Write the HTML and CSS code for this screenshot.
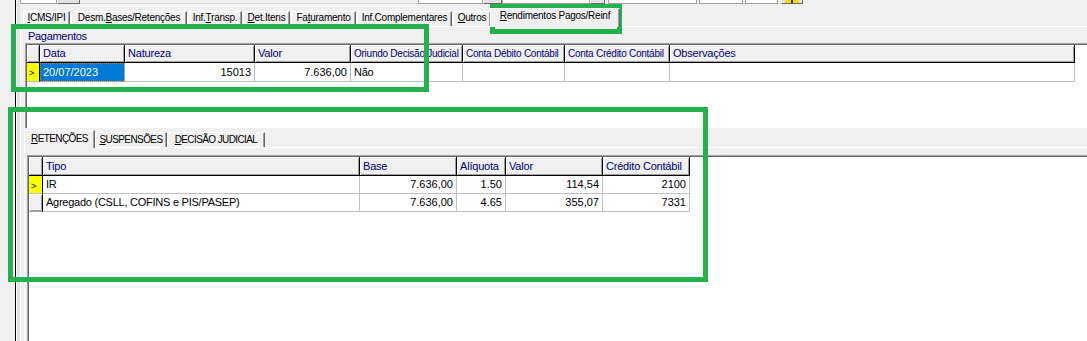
FILE: index.html
```html
<!DOCTYPE html>
<html lang="pt-BR">
<head>
  <meta charset="UTF-8">
  <title>Rendimentos Pagos/Reinf</title>
  <link rel="stylesheet" href="styles.css">
</head>
<body>
  <div class="app">
    <div class="gutter"></div>
    <div class="main">
      <div class="topbar">
        <span class="fld w37"></span><span class="btn w23"></span>
        <span class="gap w338"></span>
        <span class="fld w65"></span><span class="btn w19"></span>
        <span class="fld w88"></span><span class="btn w15"></span>
        <span class="gap w3"></span><span class="fld w89"></span>
        <span class="gap w2"></span><span class="fld w44"></span>
        <span class="gap w2"></span><span class="fld w33"></span>
        <span class="gap w3"></span><span class="btn icon w22"></span>
      </div>

      <div class="tabs">
        <div class="tab"><u>I</u>CMS/IPI</div>
        <div class="tab">Desm.<u>B</u>ases/Retenções</div>
        <div class="tab">Inf.<u>T</u>ransp.</div>
        <div class="tab"><u>D</u>et.Itens</div>
        <div class="tab">Fa<u>t</u>uramento</div>
        <div class="tab">Inf.Complementares</div>
        <div class="tab"><u>O</u>utros</div>
        <div class="tab active"><u>R</u>endimentos Pagos/Reinf</div>
      </div>

      <div class="sheet">
        <div class="caption">Pagamentos</div>
        <div class="gwrap top">
          <div class="grid g1">
            <div class="hd"></div>
            <div class="hd">Data</div>
            <div class="hd">Natureza</div>
            <div class="hd">Valor</div>
            <div class="hd sm">Oriundo Decisão Judicial</div>
            <div class="hd sm">Conta Débito Contábil</div>
            <div class="hd sm">Conta Crédito Contábil</div>
            <div class="hd">Observações</div>

            <div class="ind cur">&gt;</div>
            <div class="cell num-txt sel">20/07/2023</div>
            <div class="cell num">15013</div>
            <div class="cell num">7.636,00</div>
            <div class="cell">Não</div>
            <div class="cell"></div>
            <div class="cell"></div>
            <div class="cell"></div>
          </div>
        </div>

        <div class="lower">
          <div class="subtabs">
            <div class="stab active"><u>R</u>ETENÇÕES</div>
            <div class="stab"><u>S</u>USPENSÕES</div>
            <div class="stab"><u>D</u>ECISÃO JUDICIAL</div>
          </div>
          <div class="subbody">
            <div class="gwrap bottom">
              <div class="grid g2">
                <div class="hd"></div>
                <div class="hd">Tipo</div>
                <div class="hd">Base</div>
                <div class="hd">Alíquota</div>
                <div class="hd">Valor</div>
                <div class="hd">Crédito Contábil</div>

                <div class="ind cur">&gt;</div>
                <div class="cell">IR</div>
                <div class="cell num">7.636,00</div>
                <div class="cell num">1.50</div>
                <div class="cell num">114,54</div>
                <div class="cell num">2100</div>

                <div class="ind"></div>
                <div class="cell">Agregado (CSLL, COFINS e PIS/PASEP)</div>
                <div class="cell num">7.636,00</div>
                <div class="cell num">4.65</div>
                <div class="cell num">355,07</div>
                <div class="cell num">7331</div>
              </div>
            </div>
          </div>
        </div>
      </div>
    </div>
  </div>

  <div class="mark mark-tab"></div>
  <div class="mark mark-pay"></div>
  <div class="mark mark-ret"></div>
</body>
</html>
```

FILE: styles.css
```css
* {
  box-sizing: border-box;
}
body {
  margin: 0;
  height: 341px;
  overflow: hidden;
  position: relative;
  background: #f0f0f0;
  color: #000;
  font-family: "Liberation Sans", Arial, sans-serif;
  font-size: 11px;
}
u {
  text-decoration: underline;
  text-underline-offset: 1px;
}
.app {
  display: flex;
  height: 341px;
}
.gutter {
  flex: none;
  width: 15px;
}
.main {
  flex: 1;
  min-width: 0;
  display: flex;
  flex-direction: column;
  border-left: 1px solid #000;
  box-shadow: inset 1px 0 #fff, inset 4px 0 #e3e3e3;
}

/* cut-off edit fields at the very top */
.topbar {
  display: flex;
  flex: none;
  height: 4px;
  padding-left: 4px;
}
.topbar span {
  flex: none;
  height: 4px;
}
.fld {
  background: #fff;
  border: 1px solid #a0a0a0;
  border-top: 0;
}
.btn {
  background: #e1e1e1;
  border-left: 1px solid #fff;
  border-right: 1px solid #696969;
  border-bottom: 1px solid #696969;
}
.btn.icon {
  background: linear-gradient(90deg, #e1e1e1 3px, #ffd800 3px, #ffd800 9px, #333 9px, #333 11px, #ffd800 11px, #ffd800 17px, #e1e1e1 17px);
}
.gap {
  border-bottom: 1px solid #dadada;
}
.w2 { width: 2px; }
.w3 { width: 3px; }
.w15 { width: 15px; }
.w19 { width: 19px; }
.w22 { width: 22px; }
.w23 { width: 23px; }
.w33 { width: 33px; }
.w37 { width: 37px; }
.w44 { width: 44px; }
.w65 { width: 65px; }
.w88 { width: 88px; }
.w89 { width: 89px; }
.w338 { width: 338px; }

/* main page control */
.tabs {
  display: grid;
  grid-template-columns: 48px 117px 55px 48px 66px 96px 39px 126px;
  align-items: end;
  flex: none;
  height: 18px;
  margin-top: 4px;
  padding-left: 7px;
  font-size: 10px;
  letter-spacing: -0.25px;
}
.tab {
  height: 15px;
  margin-right: 1px;
  border-top: 1px solid #fff;
  border-left: 1px solid #fff;
  border-right: 1px solid #696969;
  box-shadow: inset -1px 0 #a0a0a0;
  line-height: 11px;
  text-align: center;
  white-space: nowrap;
}
.tab.active {
  position: relative;
  z-index: 1;
  height: 19px;
  margin: 0 -2px -1px -2px;
  padding-top: 1px;
  background: #f0f0f0;
}

.sheet {
  flex: 1;
  min-height: 0;
  display: flex;
  flex-direction: column;
  margin-left: 4px;
  border-top: 1px solid #fff;
  border-left: 1px solid #fff;
}
.caption {
  flex: none;
  height: 16px;
  padding: 2px 0 0 7px;
  line-height: 14px;
  color: #000080;
  letter-spacing: -0.3px;
}

/* grids */
.gwrap {
  overflow: hidden;
  background: #fff;
  border-top: 1px solid #a0a0a0;
  border-left: 1px solid #a0a0a0;
  padding: 1px 0 0 1px;
  box-shadow: inset 1px 1px #696969;
}
.gwrap.top {
  flex: none;
  height: 85px;
  margin-left: 4px;
}
.gwrap.bottom {
  flex: 1;
  margin-left: 2px;
}
.grid {
  display: grid;
}
.g1 {
  grid-template-columns: 13px 85px 130px 96px 112px 102px 105px 405px;
  grid-template-rows: 18px 19px;
}
.g2 {
  grid-template-columns: 14px 317px 97px 49px 97px 87px;
  grid-template-rows: 19px 18px 18px;
}
.hd {
  background: #f0f0f0;
  border-right: 1px solid #000;
  border-bottom: 1px solid #000;
  box-shadow: inset 1px 1px #fff, inset -1px -1px #a0a0a0;
  padding-left: 3px;
  color: #000080;
  line-height: 17px;
  letter-spacing: -0.2px;
  white-space: nowrap;
  overflow: hidden;
}
.g2 .hd {
  line-height: 18px;
}
.hd.sm {
  font-size: 10px;
  letter-spacing: -0.25px;
}
.cell {
  border-right: 1px solid #c0c0c0;
  border-bottom: 1px solid #c0c0c0;
  padding: 0 3px;
  line-height: 18px;
  letter-spacing: -0.25px;
  white-space: nowrap;
  overflow: hidden;
}
.g2 .cell {
  line-height: 17px;
}
.num,
.num-txt {
  letter-spacing: 0;
}
.num {
  text-align: right;
}
.sel {
  background: #0078d7;
  color: #fff;
  outline: 1px dotted #c87a30;
  outline-offset: -1px;
}
.ind {
  background: #f0f0f0;
  border-right: 1px solid #000;
  border-bottom: 1px solid #a0a0a0;
  box-shadow: inset 1px 1px #fff, inset -1px -1px #a0a0a0;
}
.ind.cur {
  background: #ff0;
  box-shadow: none;
  border-bottom-color: #c0c0c0;
  padding: 5px 0 0 2px;
  font-size: 9px;
  line-height: 10px;
}

/* lower page control */
.lower {
  flex: 1;
  min-height: 0;
  display: flex;
  flex-direction: column;
  margin-left: 3px;
}
.subtabs {
  display: grid;
  grid-template-columns: 71px 72px 98px;
  align-items: end;
  flex: none;
  height: 19px;
  font-size: 10px;
  letter-spacing: -0.6px;
}
.stab {
  height: 15px;
  padding-top: 1px;
  border-top: 1px solid #fff;
  border-left: 1px solid #fff;
  border-right: 1px solid #696969;
  box-shadow: inset -1px 0 #a0a0a0;
  line-height: 11px;
  text-align: center;
  white-space: nowrap;
}
.stab.active {
  position: relative;
  z-index: 1;
  height: 18px;
  margin-bottom: -1px;
  padding-top: 2px;
  background: #f0f0f0;
}
.subbody {
  flex: 1;
  min-height: 0;
  display: flex;
  flex-direction: column;
  padding-top: 7px;
  border-top: 1px solid #fff;
  border-left: 1px solid #fff;
}

/* green annotation frames drawn over the screenshot */
.mark {
  position: absolute;
  border: 5px solid #22b14c;
}
.mark-tab {
  left: 490px;
  top: 4px;
  width: 132px;
  height: 30px;
}
.mark-pay {
  left: 11px;
  top: 24px;
  width: 418px;
  height: 68px;
}
.mark-ret {
  left: 8px;
  top: 107px;
  width: 700px;
  height: 175px;
}
```
